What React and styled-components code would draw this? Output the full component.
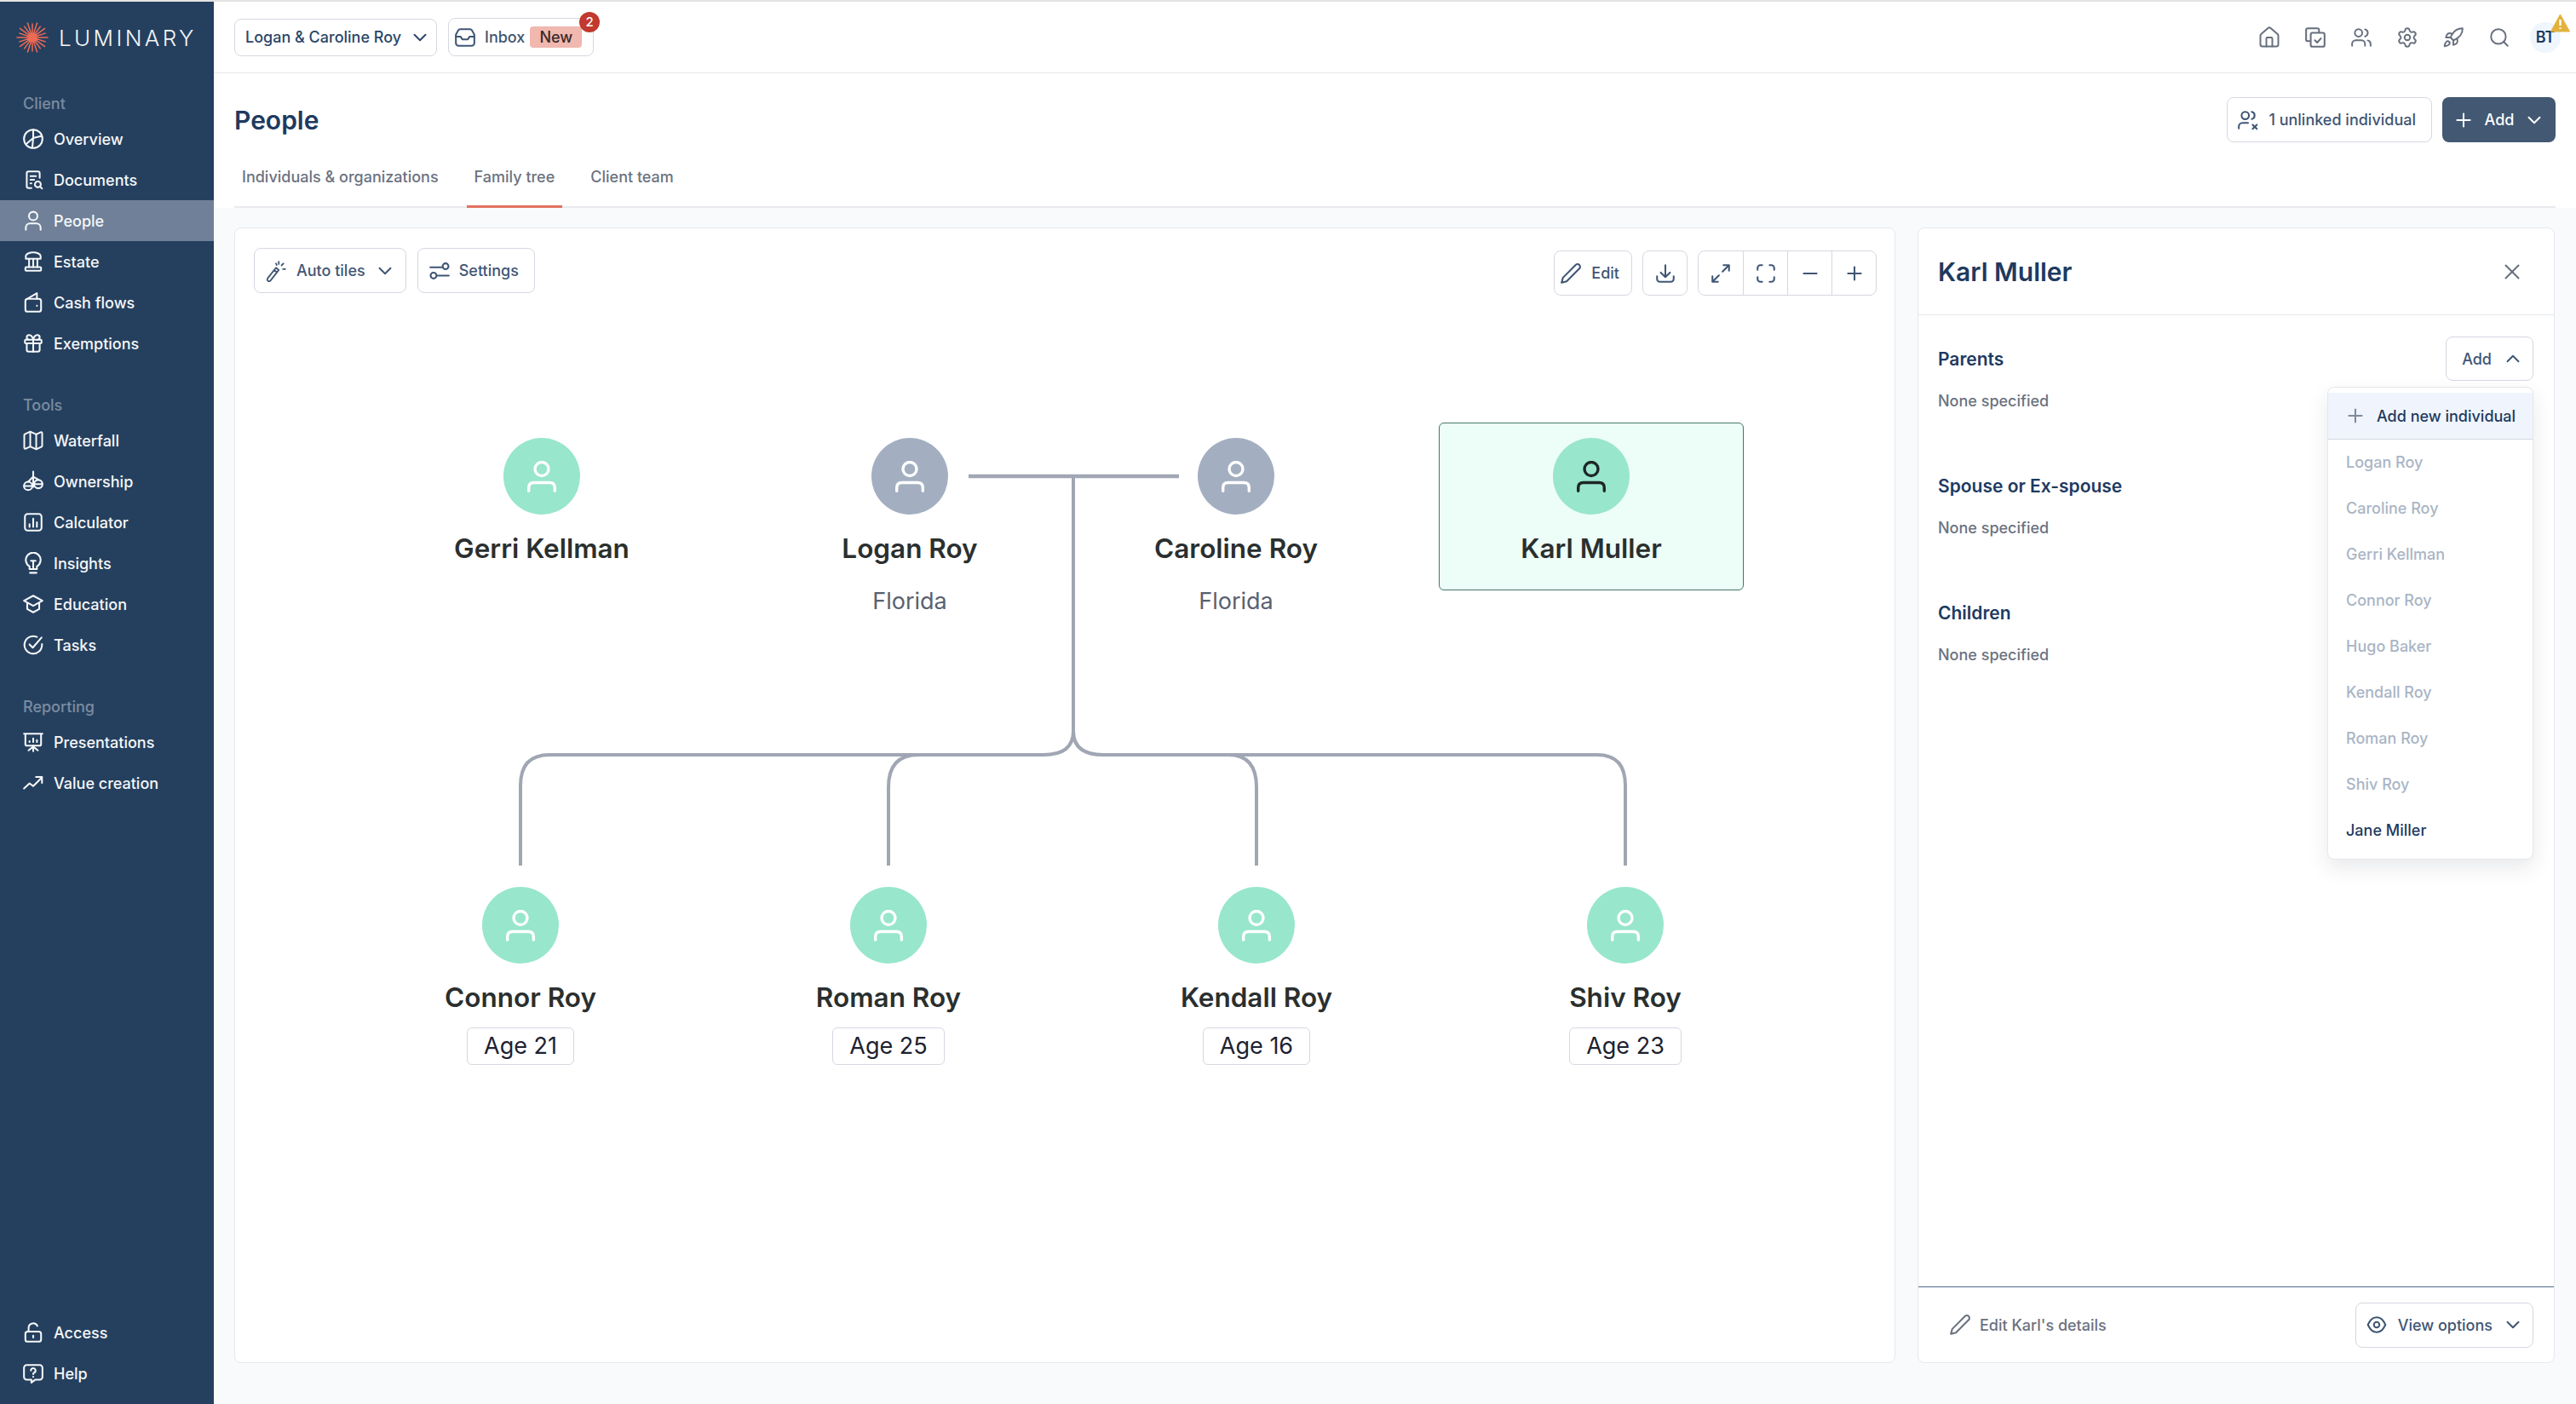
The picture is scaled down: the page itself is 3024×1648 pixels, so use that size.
import React from 'react';
import styled, { createGlobalStyle } from 'styled-components';
import { ChevronDown, ChevronUp, Gift, House, Map as MapIcon, Minus, Plus, Rocket, Search, Settings, Users, X } from 'lucide-react';

const GlobalStyle = createGlobalStyle`
  html, body {
    margin: 0;
    padding: 0;
    background: #f9fafb;
  }
  body {
    font-family: Inter, "Liberation Sans", sans-serif;
    font-size: 18px;
    color: #1e3a5f;
  }
  * {
    box-sizing: border-box;
  }
`;

const Shell = styled.div`
  display: flex;
  width: 3024px;
  height: 1648px;
  border-top: 2px solid #e3e3e3;
  overflow: hidden;
`;

/* ---------- sidebar ---------- */

const Sidebar = styled.aside`
  display: flex;
  flex-direction: column;
  flex: 0 0 251px;
  background: #25405f;
  color: #fff;
  padding-bottom: 12px;
`;

const LogoRow = styled.div`
  display: flex;
  align-items: center;
  gap: 12px;
  height: 84px;
  padding-left: 19px;
`;

const LogoText = styled.span`
  font-size: 26px;
  font-weight: 300;
  letter-spacing: 3.4px;
  color: #f4f6f8;
`;

const NavSection = styled.div`
  padding-top: ${(p) => p.$top}px;
  margin-top: ${(p) => (p.$bottom ? 'auto' : '0')};
`;

const NavLabel = styled.div`
  height: 24px;
  line-height: 24px;
  margin-bottom: 5px;
  padding-left: 27px;
  font-size: 18px;
  font-weight: 500;
  color: #7c8ca1;
`;

const NavItem = styled.div`
  display: flex;
  align-items: center;
  gap: 13px;
  height: 48px;
  padding-left: 28px;
  font-size: 18px;
  font-weight: 500;
  background: ${(p) => (p.$active ? '#6f8098' : 'transparent')};
  color: #f5f7f9;
`;

/* ---------- top bar ---------- */

const Main = styled.main`
  display: flex;
  flex-direction: column;
  flex: 1;
  min-width: 0;
`;

const TopBar = styled.header`
  display: flex;
  align-items: center;
  height: 84px;
  padding: 0 18px 0 24px;
  background: #fff;
  border-bottom: 1px solid #e7e8ec;
`;

const OutlineButton = styled.button`
  display: inline-flex;
  align-items: center;
  gap: ${(p) => p.$gap ?? 12}px;
  height: ${(p) => p.$h ?? 53}px;
  padding: 0 ${(p) => p.$padR ?? p.$pad ?? 14}px 0 ${(p) => p.$pad ?? 14}px;
  background: #fff;
  border: 1px solid #d6d8e1;
  border-radius: 8px;
  font-family: inherit;
  font-size: 18px;
  font-weight: 500;
  color: #3f5674;
  white-space: nowrap;
`;

const ClientSelect = styled(OutlineButton)`
  width: 238px;
  justify-content: space-between;
  color: #2b4668;
`;

const InboxButton = styled(OutlineButton)`
  position: relative;
  width: 171px;
  margin-left: 13px;
  padding-left: 8px;
  gap: 12px;
`;

const NewPill = styled.span`
  height: 25px;
  line-height: 25px;
  margin-left: -6px;
  padding: 0 11px;
  border-radius: 4px;
  background: #f0b8af;
  color: #3a2a2a;
`;

const CountBadge = styled.span`
  position: absolute;
  top: -8px;
  right: -8px;
  width: 24px;
  height: 24px;
  border-radius: 50%;
  background: #c2392f;
  color: #fff;
  font-size: 15px;
  line-height: 24px;
  text-align: center;
`;

const TopIcons = styled.div`
  display: flex;
  align-items: center;
  margin-left: auto;
`;

const TopIcon = styled.span`
  display: flex;
  justify-content: center;
  width: 54px;
  color: #676f7e;
`;

const Avatar = styled.div`
  position: relative;
  width: 36px;
  height: 36px;
  margin-left: 9px;
  border-radius: 50%;
  background: #eff6fd;
  color: #1e3a5f;
  font-size: 18px;
  font-weight: 600;
  line-height: 36px;
  text-align: center;
`;

const WarnMark = styled.svg`
  position: absolute;
  top: -10px;
  right: -11px;
  width: 23px;
  height: 22px;
`;

const Caret = styled(ChevronDown)`
  flex: none;
  margin: -3px;
  stroke-width: 1.8;
`;

const CaretUp = styled(ChevronUp)`
  flex: none;
  margin: -3px;
  stroke-width: 1.8;
`;

const PlusMark = styled(Plus)`
  flex: none;
  margin: -2px;
  stroke-width: 1.9;
`;

const GiftMark = styled(Gift)`
  flex: none;
  margin: -2px;
  stroke-width: 1.9;
`;

const MapMark = styled(MapIcon)`
  flex: none;
  margin: -3px;
  stroke-width: 1.7;
`;

/* ---------- page head ---------- */

const PageHead = styled.section`
  padding: 28px 24px 0;
  background: #fff;
`;

const TitleRow = styled.div`
  display: flex;
  align-items: center;
  justify-content: space-between;
  height: 53px;
  margin-bottom: 5px;
`;

const PageTitle = styled.h1`
  margin: 0;
  font-size: 30px;
  font-weight: 600;
  color: #1e3a5f;
`;

const TitleActions = styled.div`
  display: flex;
  gap: 12px;
`;

const PrimaryButton = styled.button`
  display: inline-flex;
  align-items: center;
  justify-content: space-between;
  width: 133px;
  height: 53px;
  padding: 0 15px 0 14px;
  border: none;
  border-radius: 8px;
  background: #425873;
  color: #fff;
  font-family: inherit;
  font-size: 18px;
  font-weight: 500;
`;

const Tabs = styled.nav`
  display: flex;
  gap: 24px;
  box-shadow: inset 0 -2px 0 #e8eaee;
`;

const Tab = styled.div`
  height: 72px;
  padding: 24px 9px 0;
  line-height: 24px;
  font-size: 18px;
  font-weight: 500;
  color: #6b7280;
  border-bottom: 3px solid ${(p) => (p.$active ? '#e2725f' : 'transparent')};
`;

/* ---------- tree card ---------- */

const Body = styled.div`
  display: flex;
  flex: 1;
  gap: 26px;
  min-height: 0;
  padding: 23px 25px 48px 24px;
`;

const TreeCard = styled.section`
  display: flex;
  flex-direction: column;
  flex: 0 0 1950px;
  background: #fff;
  border: 1px solid #e7e8ec;
  border-radius: 8px;
`;

const Toolbar = styled.div`
  display: flex;
  justify-content: space-between;
  height: 79px;
  padding: 23px 21px 0 22px;
`;

const ToolGroup = styled.div`
  display: flex;
  gap: ${(p) => p.$gap}px;
  margin-top: ${(p) => p.$top ?? 0}px;
`;

const ButtonStrip = styled.div`
  display: flex;
  height: 53px;
  border: 1px solid #d6d8e1;
  border-radius: 8px;
`;

const StripCell = styled.span`
  display: flex;
  align-items: center;
  justify-content: center;
  width: 52px;
  color: #3f5674;
  & + & {
    border-left: 1px solid #d6d8e1;
  }
`;

const IconOnlyButton = styled(OutlineButton)`
  justify-content: center;
  width: 53px;
  padding: 0;
`;

const Canvas = styled.div`
  position: relative;
  flex: 1;
`;

const Wires = styled.svg`
  position: absolute;
  top: 0;
  left: 0;
  fill: none;
  stroke: #a0a6b3;
  stroke-width: 4;
`;

const Node = styled.div`
  position: absolute;
  display: flex;
  flex-direction: column;
  align-items: center;
  width: 340px;
  margin-left: -170px;
`;

const SelectedBox = styled.div`
  position: absolute;
  border: 1px solid #48756a;
  border-radius: 6px;
  background: #edfdf7;
`;

const Disc = styled.div`
  display: flex;
  align-items: center;
  justify-content: center;
  width: 90px;
  height: 90px;
  border-radius: 50%;
  background: ${(p) => (p.$grey ? '#a3afc1' : '#98e6cb')};
  color: ${(p) => (p.$dark ? '#1d2727' : '#fff')};
`;

const NodeName = styled.div`
  margin-top: 20px;
  height: 40px;
  line-height: 40px;
  font-size: 31.5px;
  font-weight: 600;
  color: #2a2f2f;
`;

const NodeState = styled.div`
  margin-top: 24px;
  line-height: 36px;
  font-size: 27px;
  color: #5a6170;
`;

const AgeTag = styled.div`
  margin-top: 15px;
  height: 44px;
  padding: 0 19px;
  line-height: 42px;
  border: 1px solid #d6d8e1;
  border-radius: 6px;
  font-size: 27px;
  color: #1d2230;
`;

/* ---------- side panel ---------- */

const Panel = styled.aside`
  display: flex;
  flex-direction: column;
  flex: 1;
  background: #fff;
  border: 1px solid #e7e8ec;
  border-radius: 8px;
`;

const PanelHead = styled.div`
  display: flex;
  align-items: center;
  justify-content: space-between;
  flex: 0 0 102px;
  padding: 0 34px 0 23px;
  border-bottom: 1px solid #e7e8ec;
`;

const PanelTitle = styled.h2`
  margin: 0;
  font-size: 30px;
  font-weight: 600;
  color: #1e3a5f;
`;

const CloseMark = styled.span`
  display: flex;
  color: #676f7e;
`;

const PanelBody = styled.div`
  flex: 1;
  padding: 25px 24px 0 23px;
`;

const RelationHead = styled.div`
  position: relative;
  display: flex;
  align-items: center;
  justify-content: space-between;
  height: 52px;
`;

const RelationTitle = styled.div`
  font-size: 21px;
  font-weight: 600;
  color: #1e3a5f;
`;

const NoneText = styled.div`
  height: 24px;
  line-height: 24px;
  margin-top: 12px;
  margin-bottom: 61px;
  font-size: 18px;
  font-weight: 500;
  color: #6b7280;
`;

const Menu = styled.div`
  position: absolute;
  top: calc(100% + 7px);
  right: 0;
  z-index: 2;
  width: 242px;
  padding: 6px 0;
  background: #fff;
  border: 1px solid #e5e7eb;
  border-radius: 8px;
  box-shadow: 0 10px 24px rgba(30, 40, 60, 0.1);
`;

const MenuAdd = styled.div`
  display: flex;
  align-items: center;
  gap: 14px;
  height: 55px;
  padding-left: 21px;
  background: #f0f5fd;
  border-bottom: 1px solid #d6d8e1;
  font-size: 18px;
  font-weight: 500;
  color: #1e3a5f;
  svg {
    color: #7f8a9b;
  }
`;

const MenuItem = styled.div`
  height: 54px;
  padding-left: 21px;
  line-height: 54px;
  font-size: 18px;
  font-weight: 500;
  color: ${(p) => (p.$enabled ? '#1e3a5f' : '#a9b5c5')};
`;

const PanelFoot = styled.div`
  display: flex;
  align-items: center;
  justify-content: space-between;
  flex: 0 0 89px;
  padding: 0 24px 0 38px;
  border-top: 1px solid #4f6a8d;
`;

const EditLink = styled.div`
  display: flex;
  align-items: center;
  gap: 12px;
  font-size: 18px;
  font-weight: 500;
  color: #6b7280;
`;

/* ---------- icons ---------- */

const Glyph = styled.svg`
  flex: none;
  margin: ${(p) => p.$margin ?? 0}px;
  fill: none;
  stroke: currentColor;
  stroke-width: ${(p) => p.$weight ?? 1.9};
  stroke-linecap: round;
  stroke-linejoin: round;
`;

// drawn on a 24 grid at 26px so the ink is about 22px; the margin keeps a 22px box
const Icon = ({ size = 26, weight, children }) => (
  <Glyph width={size} height={size} viewBox="0 0 24 24" $weight={weight} $margin={-2}>
    {children}
  </Glyph>
);

const OverviewIcon = () => (
  <Icon>
    <circle cx="12" cy="12" r="10" />
    <path d="M12 2v9l-7 6M12 11l8.5-2M12 11l-1 10.5" />
  </Icon>
);
const DocumentIcon = () => (
  <Icon>
    <path d="M19 10V5a2 2 0 0 0-2-2H7a2 2 0 0 0-2 2v14a2 2 0 0 0 2 2h3M9 8h6M9 12h4M9 16h1" />
    <circle cx="17" cy="17" r="3.2" />
    <path d="m19.5 19.5 2 2" />
  </Icon>
);
const PersonIcon = () => (
  <Icon>
    <circle cx="12" cy="7" r="4.6" />
    <path d="M4 22v-2.5A4.5 4.5 0 0 1 8.5 15h7a4.5 4.5 0 0 1 4.5 4.5V22" />
  </Icon>
);
const EstateIcon = () => (
  <Icon>
    <path d="M4 9V6c0-2 4-4 8-4s8 2 8 4v3z" />
    <path d="M7.5 9v9M12 9v9M16.5 9v9" />
    <rect x="3.5" y="18" width="17" height="4" rx="1" />
  </Icon>
);
const WalletIcon = () => (
  <Icon>
    <path d="M5 8.5 16 2v6" />
    <rect x="3.5" y="8" width="17" height="14" rx="2.5" />
    <path d="M16 15.5v.2" />
  </Icon>
);
const ScaleIcon = () => (
  <Icon>
    <path d="M12 1.5V18M6.5 12.5 12 7l5.5 3" />
    <circle cx="6.5" cy="17" r="4.5" />
    <circle cx="17.5" cy="15" r="4.5" />
    <path d="M2 17h9M13 15h9" />
  </Icon>
);
const ChartBoxIcon = () => (
  <Icon>
    <rect x="3" y="3" width="18" height="18" rx="3" />
    <path d="M8 17v-3M12 17V8M16 17v-5" />
  </Icon>
);
const BulbIcon = () => (
  <Icon>
    <path d="M8.5 22.5h7M8.5 18.5h7" />
    <path d="M8 18.5v-3a8 8 0 1 1 8 0v3z" />
    <path d="M9.5 9.5h5M12 9.5v9" />
  </Icon>
);
const CapIcon = () => (
  <Icon>
    <path d="M12 3 2 8.5 12 14l10-5.500z" />
    <path d="M5.5 11v6.5L12 21l6.5-3.500V11" />
  </Icon>
);
const TaskIcon = () => (
  <Icon>
    <path d="M21.5 11v1A9.5 9.5 0 1 1 16 3.4" />
    <path d="m8 11.5 3.5 3.500L21 4" />
  </Icon>
);
const BoardIcon = () => (
  <Icon>
    <path d="M2 3h20M3.5 3v11a2 2 0 0 0 2 2h13a2 2 0 0 0 2-2V3" />
    <path d="M8 11v1M12 8v4M16 10v2M12 16v6M12 17l-5 4M12 17l5 4" />
  </Icon>
);
const TrendIcon = () => (
  <Icon>
    <path d="m2 18 6-5.500 4 3 9.500-9.500M15 5.500h6.500V12" />
  </Icon>
);
const UnlockIcon = () => (
  <Icon>
    <path d="M7 11V7a5 5 0 0 1 9.5-2" />
    <rect x="3.5" y="11" width="17" height="11" rx="2.5" />
    <path d="M12 15.5v2" />
  </Icon>
);
const HelpIcon = () => (
  <Icon>
    <path d="M5 3h14a3 3 0 0 1 3 3v10a3 3 0 0 1-3 3h-5l-4 3v-3H5a3 3 0 0 1-3-3V6a3 3 0 0 1 3-3z" />
    <path d="M9.5 9a2.5 2.5 0 1 1 3.5 2.3c-.7.3-1 .8-1 1.7M12 15.8v.1" />
  </Icon>
);
const InboxIcon = () => (
  <Icon>
    <path d="M7 3h10a3 3 0 0 1 2.6 1.5L22 9v9a3 3 0 0 1-3 3H5a3 3 0 0 1-3-3V9l2.4-4.5A3 3 0 0 1 7 3z" />
    <path d="M2 11h5l2 3h6l2-3h5" />
  </Icon>
);
const WandIcon = () => (
  <Icon weight={1.7}>
    <path d="M3 20 12 8.5l3 2.500-9 11.500a1 1 0 0 1-3-2.500zM10 11l3 2.500" />
    <path d="M15 2v2.500M20 4l-2 2M22 10h-2.500M12 4l.8 1.500" />
  </Icon>
);
const SlidersIcon = () => (
  <Icon>
    <path d="M2 8h12M10 17h12" />
    <circle cx="18.5" cy="7" r="3.2" />
    <circle cx="5.5" cy="17" r="3.2" />
  </Icon>
);
const PencilIcon = () => (
  <Icon>
    <path d="M17 3a2.85 2.85 0 1 1 4 4L7.5 20.5 2 22l1.5-5.5z" />
  </Icon>
);
const DownloadIcon = () => (
  <Icon>
    <path d="M12 3v13M7 11l5 5 5-5M3 15v3a3 3 0 0 0 3 3h12a3 3 0 0 0 3-3v-3" />
  </Icon>
);
const ExpandIcon = () => (
  <Icon>
    <path d="m14 10 7-7M15 3h6v6M10 14l-7 7M9 21H3v-6" />
  </Icon>
);
const FrameIcon = () => (
  <Icon>
    <path d="M3 8V6a3 3 0 0 1 3-3h2M16 3h2a3 3 0 0 1 3 3v2M21 16v2a3 3 0 0 1-3 3h-2M8 21H6a3 3 0 0 1-3-3v-2" />
  </Icon>
);
const CopyCheckIcon = () => (
  <Icon>
    <path d="M16 6V4a2 2 0 0 0-2-2H4a2 2 0 0 0-2 2v10a2 2 0 0 0 2 2h2" />
    <rect x="7" y="7" width="15" height="15" rx="2" />
    <path d="m11.5 15 2.5 2.5 4-4.500" />
  </Icon>
);
const UnlinkedIcon = () => (
  <Icon>
    <circle cx="9" cy="7" r="4" />
    <path d="M2 21v-2a4 4 0 0 1 4-4h6M16 3.100a4 4 0 0 1 0 7.800M17 17l4.500 4.500M21.500 17 17 21.500" />
  </Icon>
);
const EyeIcon = () => (
  <Icon>
    <path d="M2.500 12c1-2 2-4 3.500-5.500S9.500 4 12 4s4.500 1 6 2.500 2.500 3.500 3.500 5.500c-1 2-2 4-3.500 5.500S14.500 20 12 20s-4.500-1-6-2.500S3.500 14 2.500 12z" />
    <circle cx="12" cy="12" r="3" />
  </Icon>
);

const BigPerson = () => (
  <Glyph width="34" height="37" viewBox="0 0 34 37" $weight={3.4}>
    <circle cx="17" cy="9.500" r="8" />
    <path d="M1.700 35.300V31.500c0-4 2.500-6 6-6h18.600c3.500 0 6 2 6 6v3.800" />
  </Glyph>
);

const SunburstLogo = () => {
  const rays = Array.from({ length: 20 }, (_, i) => {
    const a = (i * Math.PI) / 10;
    const r = i % 2 ? 16.5 : 18.5;
    return `M${19 + 1.5 * Math.cos(a)} ${19 + 1.5 * Math.sin(a)}L${19 + r * Math.cos(a)} ${19 + r * Math.sin(a)}`;
  }).join('');
  return (
    <svg width="38" height="38" viewBox="0 0 38 38">
      <path d={rays} stroke="#ee6a55" strokeWidth="1.5" fill="none" />
      <circle cx="19" cy="19" r="4.5" fill="#ee6a55" />
    </svg>
  );
};

/* ---------- data ---------- */

const clientNav = [
  ['Overview', OverviewIcon],
  ['Documents', DocumentIcon],
  ['People', PersonIcon, true],
  ['Estate', EstateIcon],
  ['Cash flows', WalletIcon],
  ['Exemptions', () => <GiftMark size={26} />],
];
const toolNav = [
  ['Waterfall', () => <MapMark size={28} />],
  ['Ownership', ScaleIcon],
  ['Calculator', ChartBoxIcon],
  ['Insights', BulbIcon],
  ['Education', CapIcon],
  ['Tasks', TaskIcon],
];
const reportNav = [
  ['Presentations', BoardIcon],
  ['Value creation', TrendIcon],
];
const footNav = [
  ['Access', UnlockIcon],
  ['Help', HelpIcon],
];

const parents = [
  { name: 'Gerri Kellman', x: 360 },
  { name: 'Logan Roy', x: 792, grey: true, state: 'Florida' },
  { name: 'Caroline Roy', x: 1175, grey: true, state: 'Florida' },
  { name: 'Karl Muller', x: 1592, dark: true },
];
const children = [
  { name: 'Connor Roy', x: 335, age: 21 },
  { name: 'Roman Roy', x: 767, age: 25 },
  { name: 'Kendall Roy', x: 1199, age: 16 },
  { name: 'Shiv Roy', x: 1632, age: 23 },
];
const pickable = ['Logan Roy', 'Caroline Roy', 'Gerri Kellman', 'Connor Roy', 'Hugo Baker', 'Kendall Roy', 'Roman Roy', 'Shiv Roy'];

const NavList = ({ items }) =>
  items.map(([label, Glyphic, active]) => (
    <NavItem key={label} $active={active}>
      <Glyphic />
      {label}
    </NavItem>
  ));

const PersonNode = ({ person, top }) => (
  <Node style={{ left: person.x, top }}>
    <Disc $grey={person.grey} $dark={person.dark}>
      <BigPerson />
    </Disc>
    <NodeName>{person.name}</NodeName>
    {person.state && <NodeState>{person.state}</NodeState>}
    {person.age && <AgeTag>Age {person.age}</AgeTag>}
  </Node>
);

export default function App() {
  return (
    <>
      <GlobalStyle />
      <Shell>
        <Sidebar>
          <LogoRow>
            <SunburstLogo />
            <LogoText>LUMINARY</LogoText>
          </LogoRow>
          <NavSection $top={24}>
            <NavLabel>Client</NavLabel>
            <NavList items={clientNav} />
          </NavSection>
          <NavSection $top={37}>
            <NavLabel>Tools</NavLabel>
            <NavList items={toolNav} />
          </NavSection>
          <NavSection $top={37}>
            <NavLabel>Reporting</NavLabel>
            <NavList items={reportNav} />
          </NavSection>
          <NavSection $top={0} $bottom>
            <NavList items={footNav} />
          </NavSection>
        </Sidebar>

        <Main>
          <TopBar>
            <ClientSelect $h={44} $pad={12} $padR={9}>
              Logan &amp; Caroline Roy
              <Caret size={26} />
            </ClientSelect>
            <InboxButton $h={45}>
              <InboxIcon />
              Inbox
              <NewPill>New</NewPill>
              <CountBadge>2</CountBadge>
            </InboxButton>
            <TopIcons>
              <TopIcon><House size={28} strokeWidth={1.7} /></TopIcon>
              <TopIcon><CopyCheckIcon /></TopIcon>
              <TopIcon><Users size={26} strokeWidth={1.8} /></TopIcon>
              <TopIcon><Settings size={26} strokeWidth={1.8} /></TopIcon>
              <TopIcon><Rocket size={26} strokeWidth={1.8} /></TopIcon>
              <TopIcon><Search size={26} strokeWidth={1.8} /></TopIcon>
              <Avatar>
                BT
                <WarnMark viewBox="0 0 23 22">
                  <path d="M11.5 1 22.5 21H.5z" fill="#e3b23c" stroke="#e3b23c" strokeLinejoin="round" />
                  <path d="M11.5 7v7M11.5 16.500v1.500" stroke="#fff" strokeWidth="2.4" />
                </WarnMark>
              </Avatar>
            </TopIcons>
          </TopBar>

          <PageHead>
            <TitleRow>
              <PageTitle>People</PageTitle>
              <TitleActions>
                <OutlineButton $pad={13} $padR={18} $gap={13}>
                  <UnlinkedIcon />
                  1 unlinked individual
                </OutlineButton>
                <PrimaryButton>
                  <PlusMark size={26} />
                  Add
                  <Caret size={26} />
                </PrimaryButton>
              </TitleActions>
            </TitleRow>
            <Tabs>
              <Tab>Individuals &amp; organizations</Tab>
              <Tab $active>Family tree</Tab>
              <Tab>Client team</Tab>
            </Tabs>
          </PageHead>

          <Body>
            <TreeCard>
              <Toolbar>
                <ToolGroup $gap={13}>
                  <OutlineButton $pad={14} $gap={13}>
                    <WandIcon />
                    Auto tiles
                    <Caret size={26} />
                  </OutlineButton>
                  <OutlineButton $pad={14} $padR={18} $gap={12}>
                    <SlidersIcon />
                    Settings
                  </OutlineButton>
                </ToolGroup>
                <ToolGroup $gap={12} $top={3}>
                  <OutlineButton $pad={8} $padR={14} $gap={13}>
                    <PencilIcon />
                    Edit
                  </OutlineButton>
                  <IconOnlyButton>
                    <DownloadIcon />
                  </IconOnlyButton>
                  <ButtonStrip>
                    <StripCell><ExpandIcon /></StripCell>
                    <StripCell><FrameIcon /></StripCell>
                    <StripCell><Minus size={26} strokeWidth={1.9} /></StripCell>
                    <StripCell><Plus size={26} strokeWidth={1.9} /></StripCell>
                  </ButtonStrip>
                </ToolGroup>
              </Toolbar>
              <Canvas>
                <SelectedBox style={{ left: 1413, top: 149, width: 358, height: 197 }} />
                <Wires width="1948" height="1252" viewBox="276 347 1948 1252">
                  <path d="M1137 559H1384" strokeWidth="4.5" />
                  <path d="M1260 559V858C1260 875 1250 886 1225 886H645C623 886 611 897 611 922V1016" />
                  <path d="M1260 858C1260 875 1270 886 1295 886H1875C1896 886 1908 897 1908 922V1016" />
                  <path d="M1078 886C1055 886 1043 898 1043 924V1016" />
                  <path d="M1442 886C1463 886 1475 898 1475 924V1016" />
                </Wires>
                {parents.map((p) => (
                  <PersonNode key={p.name} person={p} top={167} />
                ))}
                {children.map((c) => (
                  <PersonNode key={c.name} person={c} top={694} />
                ))}
              </Canvas>
            </TreeCard>

            <Panel>
              <PanelHead>
                <PanelTitle>Karl Muller</PanelTitle>
                <CloseMark><X size={30} strokeWidth={1.6} /></CloseMark>
              </PanelHead>
              <PanelBody>
                <RelationHead>
                  <RelationTitle>Parents</RelationTitle>
                  <OutlineButton $h={52} $pad={18} $padR={13} $gap={15}>
                    Add
                    <CaretUp size={26} />
                  </OutlineButton>
                  <Menu>
                    <MenuAdd>
                      <PlusMark size={26} strokeWidth={1.5} />
                      Add new individual
                    </MenuAdd>
                    {pickable.map((name) => (
                      <MenuItem key={name}>{name}</MenuItem>
                    ))}
                    <MenuItem $enabled>Jane Miller</MenuItem>
                  </Menu>
                </RelationHead>
                <NoneText>None specified</NoneText>
                <RelationHead>
                  <RelationTitle>Spouse or Ex-spouse</RelationTitle>
                </RelationHead>
                <NoneText>None specified</NoneText>
                <RelationHead>
                  <RelationTitle>Children</RelationTitle>
                </RelationHead>
                <NoneText>None specified</NoneText>
              </PanelBody>
              <PanelFoot>
                <EditLink>
                  <PencilIcon />
                  Edit Karl's details
                </EditLink>
                <OutlineButton $pad={13} $gap={14}>
                  <EyeIcon />
                  View options
                  <Caret size={26} />
                </OutlineButton>
              </PanelFoot>
            </Panel>
          </Body>
        </Main>
      </Shell>
    </>
  );
}
